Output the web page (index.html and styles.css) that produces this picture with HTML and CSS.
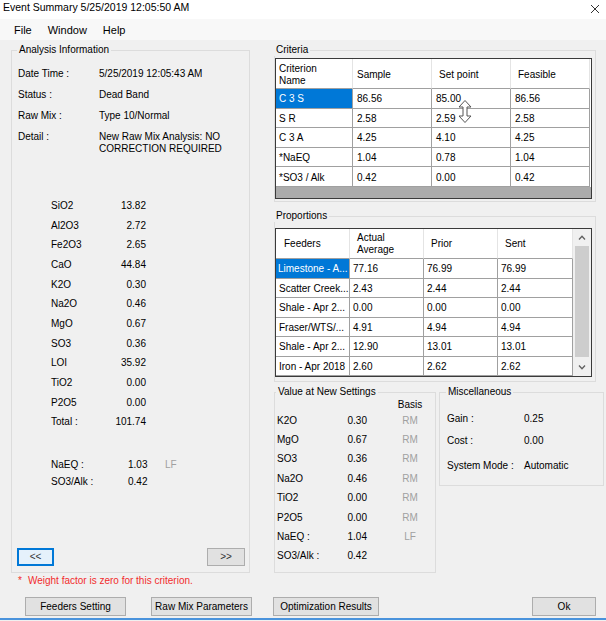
FILE: index.html
```html
<!DOCTYPE html>
<html lang="en">
<head>
    <meta charset="UTF-8">
    <title>Event Summary 5/25/2019 12:05:50 AM</title>
    <link rel="stylesheet" href="styles.css">
</head>
<body>
    <div class="titlebar">
        <span class="title">Event Summary 5/25/2019 12:05:50 AM</span>
        <svg class="close" width="10" height="10" viewBox="0 0 10 10"><path d="M1 1L9 9M9 1L1 9" stroke="#333" stroke-width="1" fill="none"/></svg>
    </div>

    <div class="menubar">
        <span>File</span>
        <span>Window</span>
        <span>Help</span>
    </div>

    <div class="main">
        <fieldset class="group analysis">
            <legend>Analysis Information</legend>
            <div class="info">
                <span>Date Time :</span><span>5/25/2019 12:05:43 AM</span>
                <span>Status :</span><span>Dead Band</span>
                <span>Raw Mix :</span><span>Type 10/Normal</span>
                <span>Detail :</span><span>New Raw Mix Analysis: NO<br>CORRECTION REQUIRED</span>
            </div>

            <div class="oxides">
                <span>SiO2</span><span>13.82</span>
                <span>Al2O3</span><span>2.72</span>
                <span>Fe2O3</span><span>2.65</span>
                <span>CaO</span><span>44.84</span>
                <span>K2O</span><span>0.30</span>
                <span>Na2O</span><span>0.46</span>
                <span>MgO</span><span>0.67</span>
                <span>SO3</span><span>0.36</span>
                <span>LOI</span><span>35.92</span>
                <span>TiO2</span><span>0.00</span>
                <span>P2O5</span><span>0.00</span>
                <span>Total :</span><span>101.74</span>
            </div>

            <div class="alkali">
                <span>NaEQ :</span><span>1.03</span><span class="basis">LF</span>
                <span>SO3/Alk :</span><span>0.42</span><span></span>
            </div>

            <div class="pager">
                <button class="btn focus prev">&lt;&lt;</button>
                <button class="btn next">&gt;&gt;</button>
            </div>
        </fieldset>

        <div class="right">
            <fieldset class="group criteria">
                <legend>Criteria</legend>
                <div class="grid">
                    <div class="rows crit-rows">
                        <div class="head">Criterion<br>Name</div>
                        <div class="head">Sample</div>
                        <div class="head">Set point</div>
                        <div class="head">Feasible</div>

                        <div class="sel">C 3 S</div><div>86.56</div><div>85.00</div><div>86.56</div>
                        <div>S R</div><div>2.58</div><div>2.59</div><div>2.58</div>
                        <div>C 3 A</div><div>4.25</div><div>4.10</div><div>4.25</div>
                        <div>*NaEQ</div><div>1.04</div><div>0.78</div><div>1.04</div>
                        <div>*SO3 / Alk</div><div>0.42</div><div>0.00</div><div>0.42</div>
                    </div>
                    <svg class="cursor" width="14" height="23" viewBox="0 0 14 23"><path d="M7 0.5L13 7H9V16H13L7 22.5L1 16H5V7H1Z" fill="#fff" stroke="#555" stroke-width="1"/></svg>
                </div>
            </fieldset>

            <fieldset class="group proportions">
                <legend>Proportions</legend>
                <div class="grid prop-grid">
                    <div class="rows prop-rows">
                        <div class="head">Feeders</div>
                        <div class="head">Actual<br>Average</div>
                        <div class="head">Prior</div>
                        <div class="head">Sent</div>

                        <div class="sel">Limestone - A...</div><div>77.16</div><div>76.99</div><div>76.99</div>
                        <div>Scatter Creek...</div><div>2.43</div><div>2.44</div><div>2.44</div>
                        <div>Shale - Apr 2...</div><div>0.00</div><div>0.00</div><div>0.00</div>
                        <div>Fraser/WTS/...</div><div>4.91</div><div>4.94</div><div>4.94</div>
                        <div>Shale - Apr 2...</div><div>12.90</div><div>13.01</div><div>13.01</div>
                        <div>Iron - Apr 2018</div><div>2.60</div><div>2.62</div><div>2.62</div>
                    </div>
                    <div class="scrollbar">
                        <div class="arrow"><svg width="8" height="5" viewBox="0 0 8 5"><path d="M1 4.5L4 1.2L7 4.5" stroke="#606060" stroke-width="1.3" fill="none"/></svg></div>
                        <div class="track"><div class="thumb"></div></div>
                        <div class="arrow"><svg width="8" height="5" viewBox="0 0 8 5"><path d="M1 0.5L4 3.8L7 0.5" stroke="#606060" stroke-width="1.3" fill="none"/></svg></div>
                    </div>
                </div>
            </fieldset>

            <div class="lower">
                <fieldset class="group values">
                    <legend>Value at New Settings</legend>
                    <div class="value-list">
                        <span></span><span></span><span class="basis-head">Basis</span>
                        <span>K2O</span><span class="num">0.30</span><span class="basis">RM</span>
                        <span>MgO</span><span class="num">0.67</span><span class="basis">RM</span>
                        <span>SO3</span><span class="num">0.36</span><span class="basis">RM</span>
                        <span>Na2O</span><span class="num">0.46</span><span class="basis">RM</span>
                        <span>TiO2</span><span class="num">0.00</span><span class="basis">RM</span>
                        <span>P2O5</span><span class="num">0.00</span><span class="basis">RM</span>
                        <span>NaEQ :</span><span class="num">1.04</span><span class="basis">LF</span>
                        <span>SO3/Alk :</span><span class="num">0.42</span><span></span>
                    </div>
                </fieldset>

                <fieldset class="group misc">
                    <legend>Miscellaneous</legend>
                    <div class="misc-list">
                        <span>Gain :</span><span>0.25</span>
                        <span>Cost :</span><span>0.00</span>
                        <span>System Mode :</span><span>Automatic</span>
                    </div>
                </fieldset>
            </div>
        </div>
    </div>

    <p class="note"><span class="star">*</span>Weight factor is zero for this criterion.</p>

    <div class="footer">
        <button class="btn feeders">Feeders Setting</button>
        <button class="btn rawmix">Raw Mix Parameters</button>
        <button class="btn optim">Optimization Results</button>
        <button class="btn ok">Ok</button>
    </div>

    <div class="edge"></div>
</body>
</html>
```

FILE: styles.css
```css
* {
    margin: 0;
    padding: 0;
    box-sizing: border-box;
}

body {
    width: 606px;
    height: 621px;
    overflow: hidden;
    background-color: #f0f0f0;
    color: #000;
    font-family: "Liberation Sans", Arial, sans-serif;
    font-size: 10px;
    line-height: 12px;
}

.titlebar {
    height: 19px;
    background-color: #fff;
    display: flex;
    justify-content: space-between;
    padding: 1px 6px 0 3px;
}

.title {
    font-size: 10.5px;
    line-height: 13px;
}

.close {
    margin-top: 3px;
}

.menubar {
    height: 21px;
    background-color: #f8f8f8;
    display: flex;
    gap: 16px;
    padding: 2px 0 0 14px;
    font-size: 11px;
    line-height: 19px;
}

.main {
    display: flex;
    gap: 24px;
    padding: 4px 0 0 11px;
}

.group {
    border: 1px solid #dcdcdc;
    min-width: 0;
}

.group legend {
    padding: 0 2px;
    margin-left: -1px;
    line-height: 12px;
}

/* left column */

.analysis {
    width: 239px;
    padding: 12px 4px 4px 6px;
}

.info {
    display: grid;
    grid-template-columns: 81px 1fr;
    row-gap: 9px;
}

.oxides {
    display: grid;
    grid-template-columns: 50px 45px;
    grid-auto-rows: 19.7px;
    align-items: center;
    margin: 41px 0 0 33px;
}

.oxides span:nth-child(even) {
    text-align: right;
}

.alkali {
    display: grid;
    grid-template-columns: 77px 37px auto;
    grid-auto-rows: 17.3px;
    align-items: center;
    margin: 24px 0 0 33px;
}

.basis {
    color: #a0a0a0;
}

.pager {
    display: flex;
    justify-content: space-between;
    margin: 57px 0 0 -1px;
}

.btn {
    height: 19px;
    background-color: #e1e1e1;
    border: 1px solid #adadad;
    font-family: inherit;
    font-size: 10px;
    color: #000;
}

.pager .btn {
    height: 18px;
    color: #333;
}

.prev {
    width: 37px;
}

.next {
    width: 38px;
}

.btn.focus {
    background-color: #e5f1fb;
    border: 2px solid #0078d7;
}

/* right column */

.right {
    width: 322px;
}

.criteria {
    padding: 2px 3px 2px 0;
}

.proportions {
    margin-top: 8px;
    padding: 6px 3px 4px 0;
}

.grid {
    position: relative;
    height: 141px;
    border: 1px solid #3a3a3a;
    background-color: #ababab;
}

.prop-grid {
    display: flex;
    height: 149px;
}

.rows {
    display: grid;
    background-color: #fff;
}

.crit-rows {
    grid-template-columns: 77px 79px 79px 79px;
    grid-template-rows: 30px repeat(5, 19.6px);
}

.prop-rows {
    grid-template-columns: 74px 74px 74px 75px;
    grid-template-rows: 30px repeat(6, 19.5px);
}

.rows > div {
    display: flex;
    align-items: center;
    padding: 2px 0 0 4px;
    border-right: 1px solid #a0a0a0;
    border-bottom: 1px solid #a0a0a0;
    white-space: nowrap;
    overflow: hidden;
}

.crit-rows > div:nth-child(4n+1) {
    padding-left: 3px;
}

.prop-rows > div {
    padding-left: 3px;
}

.rows > .head {
    padding: 3px 0 0 7px;
    border-right-color: #e4e4e4;
}

.crit-rows > .head:nth-child(2) {
    padding-left: 4px;
}

.prop-rows > .head {
    padding: 0 0 0 7px;
}

.prop-rows > .head:first-child {
    padding-left: 8px;
}

.rows > .sel {
    background-color: #0078d7;
    color: #fff;
    padding-left: 2px;
}

.cursor {
    position: absolute;
    left: 182px;
    top: 41px;
}

.scrollbar {
    flex: 1;
    display: flex;
    flex-direction: column;
    background-color: #f0f0f0;
}

.arrow {
    height: 17px;
    display: flex;
    align-items: center;
    justify-content: center;
}

.track {
    flex: 1;
    padding: 0 2px;
}

.thumb {
    height: 111px;
    background-color: #cdcdcd;
}

.lower {
    display: flex;
    gap: 3px;
    width: 330px;
    margin-top: 4px;
}

.values {
    width: 162px;
    padding: 0 3px 6px 2px;
}

.value-list {
    display: grid;
    grid-template-columns: 60px 30px 86px;
    grid-template-rows: 13px;
    grid-auto-rows: 19.4px;
    align-items: center;
}

.value-list .num {
    text-align: right;
}

.value-list .basis,
.basis-head {
    text-align: center;
}

.misc {
    width: 165px;
    align-self: flex-start;
    padding: 15px 4px 13px 7px;
}

.misc-list {
    display: grid;
    grid-template-columns: 77px auto;
    grid-template-rows: 21.7px 25px 12px;
    align-items: start;
}

/* bottom */

.note {
    margin: 2px 0 0 18px;
    color: #f22d2d;
}

.star {
    margin-right: 6px;
}

.footer {
    display: flex;
    margin-top: 10px;
    padding: 0 10px 0 25px;
}

.feeders,
.rawmix {
    width: 101px;
}

.rawmix {
    margin-left: 25px;
}

.optim {
    width: 106px;
    margin-left: 21px;
}

.ok {
    width: 64px;
    margin-left: auto;
}

.edge {
    height: 2px;
    margin-top: 2px;
    background-color: #4a93dc;
}
```
